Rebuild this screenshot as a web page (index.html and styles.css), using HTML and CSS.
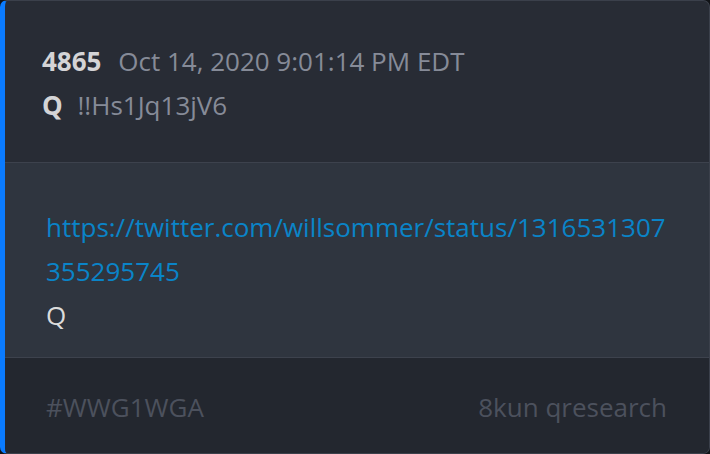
FILE: index.html
```html
<!DOCTYPE html>
<html lang="en">
<head>
    <meta charset="UTF-8">
    <meta name="viewport" content="width=device-width, initial-scale=1.0">
    <title>Post 4865</title>
    <link rel="stylesheet" href="styles.css">
</head>
<body>
    <div class="post">
        <div class="post-header">
            <div class="meta">
                <span class="num">4865</span>
                <span class="date">Oct 14, 2020 9:01:14 PM EDT</span>
            </div>
            <div class="meta">
                <span class="author">Q</span>
                <span class="trip">!!Hs1Jq13jV6</span>
            </div>
        </div>
        <div class="post-body">
            <a class="link" href="#">https://twitter.com/willsommer/status/1316531307355295745</a>
            <p class="text">Q</p>
        </div>
        <div class="post-footer">
            <span>#WWG1WGA</span>
            <span>8kun qresearch</span>
        </div>
    </div>
</body>
</html>
```

FILE: styles.css
```css
body {
    margin: 0;
    background-color: #111317;
    font-family: "Open Sans", sans-serif;
    font-size: 26px;
}

.post {
    height: 454px;
    box-sizing: border-box;
    display: flex;
    flex-direction: column;
    background: #282c35;
    border: 1px solid #3b404b;
    border-left: 5px solid #0a7bff;
    border-radius: 7px;
    overflow: hidden;
}

.post-header {
    padding: 38px 36px 35px 37px;
    border-bottom: 1px solid #3d424d;
}

.meta {
    line-height: 44px;
}

.num {
    color: #d4d4d6;
    font-weight: 700;
    margin-right: 10px;
}

.author {
    color: #d4d4d6;
    font-weight: 700;
    margin-right: 8px;
}

.date,
.trip {
    color: #868b98;
}

.post-body {
    background: #2f353f;
    padding: 42px 36px 20px 41px;
    line-height: 44px;
    border-bottom: 1px solid #3d424d;
}

.link {
    color: #0a84c8;
    text-decoration: none;
    word-break: break-all;
}

.text {
    margin: 0;
    color: #dcdcdc;
}

.post-footer {
    flex: 1;
    background: #23272f;
    display: flex;
    justify-content: space-between;
    padding: 27px 42px 0 41px;
    line-height: 44px;
    color: #4c515d;
}
```
